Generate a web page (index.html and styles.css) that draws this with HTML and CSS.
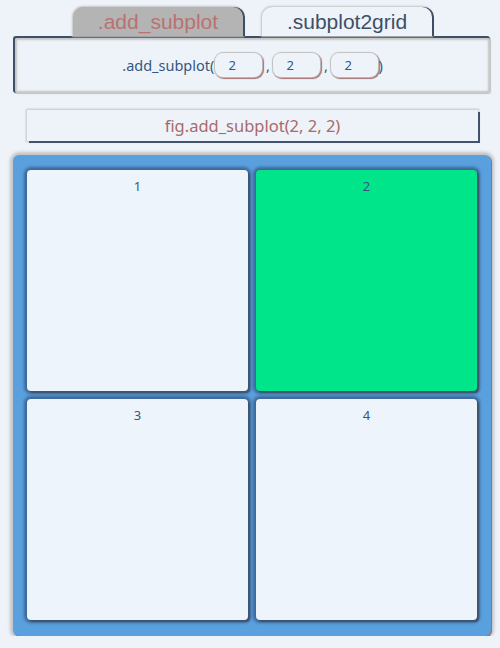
FILE: index.html
```html
<!DOCTYPE html>
<html>
<head>
<meta charset="utf-8">
<link rel="stylesheet" href="styles.css">
</head>
<body>
<div class="tabs">
  <div class="tab tab-active">.add_subplot</div>
  <div class="tab tab-idle">.subplot2grid</div>
</div>
<div class="panel">
  <span class="call">.add_subplot(</span>
  <span class="num">2</span><span class="sep">,</span>
  <span class="num">2</span><span class="sep">,</span>
  <span class="num">2</span><span class="call">)</span>
</div>
<div class="fig">fig.add_subplot(2, 2, 2)</div>
<div class="grid-panel">
  <div class="grid">
    <div class="cell">1</div>
    <div class="cell cell-on">2</div>
    <div class="cell">3</div>
    <div class="cell">4</div>
  </div>
</div>
</body>
</html>
```
FILE: styles.css
```css
html, body {
  margin: 0;
  padding: 0;
  background: #eef3fa;
  font-family: "Noto Sans", "DejaVu Sans", sans-serif;
}
.tabs {
  display: flex;
  gap: 19px;
  padding: 7px 0 0 73px;
  height: 29px;
}
.tab {
  width: 170px;
  height: 29px;
  box-sizing: border-box;
  border-radius: 10px 10px 0 0;
  font-family: "Liberation Sans", Arial, sans-serif;
  font-size: 21px;
  line-height: 30px;
  text-align: center;
  box-shadow: 2px 0 0 #3d4f66, 0 0 2px 1px #c4c4c4;
}
.tab-active {
  background: #b4b4b4;
  color: #b87272;
}
.tab-idle {
  background: #eef3fa;
  color: #3d4f66;
}
.panel {
  margin: 0 10px 0 13px;
  height: 57px;
  box-sizing: border-box;
  border-top: 2px solid #3d4f66;
  border-left: 2px solid #3d4f66;
  box-shadow: inset 0 0 2px 2px #c4c4c4, 1px 1px 1px #c4c4c4;
  border-radius: 3px;
  display: flex;
  align-items: center;
  justify-content: center;
  font-size: 14.5px;
  color: #35577f;
  padding-bottom: 2px;
}
.num {
  width: 47px;
  height: 24px;
  box-sizing: border-box;
  border-radius: 8px;
  background: #eef3fa;
  padding-left: 13px;
  line-height: 24px;
  font-size: 13px;
  color: #35577f;
  box-shadow: 0 0 1px 1px #bfbfbf, 1px 1px 1px 1px #a56a6a;
}
.sep {
  width: 11px;
  text-align: center;
}
.call + .num { margin-left: 1px; }
.fig {
  margin: 17px 22px 0 27px;
  height: 31px;
  background: #eef3fa;
  box-shadow: 2px 2px 0 #43536b, 0 0 2px 1px #c4c4c4;
  text-align: center;
  line-height: 31px;
  font-size: 16.5px;
  color: #a86a6a;
}
.grid-panel {
  margin: 14px 9px 0 13px;
  height: 481px;
  box-sizing: border-box;
  background: #5ba0de;
  border-radius: 6px;
  box-shadow: 1px 1px 0 #a56a6a, 0 0 3px 3px #c4c4c4;
  padding: 15px 14px 16px 14px;
}
.grid {
  display: grid;
  grid-template-columns: 1fr 1fr;
  grid-template-rows: 1fr 1fr;
  gap: 8px;
  height: 100%;
}
.cell {
  background: #eef4fb;
  border-radius: 4px;
  box-shadow: 2px 2px 1px #3d5570, 0 0 3px 3px rgba(58, 98, 145, 0.9);
  text-align: center;
  padding-top: 7px;
  font-size: 13px;
  color: #35577f;
}
.cell-on {
  background: #00e589;
}
```
